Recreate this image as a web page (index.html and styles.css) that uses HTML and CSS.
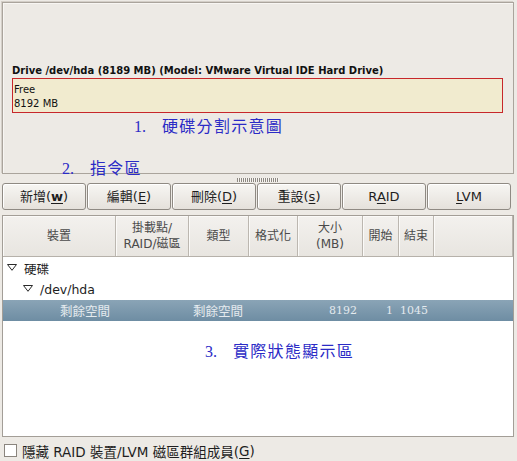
FILE: index.html
```html
<!DOCTYPE html>
<html lang="zh-Hant">
<head>
<meta charset="utf-8">
<title>Disk Druid</title>
<link rel="stylesheet" href="styles.css">
</head>
<body>
<div class="app">
  <section class="disk-panel">
    <div class="drive-label">Drive /dev/hda (8189 MB) (Model: VMware Virtual IDE Hard Drive)</div>
    <div class="drive-map">
      <div>Free</div>
      <div>8192 MB</div>
    </div>
    <div class="note note-1"><span class="num">1.</span>硬碟分割示意圖</div>
    <div class="note note-2"><span class="num">2.</span>指令區</div>
  </section>

  <div class="splitter"><span class="grip"></span></div>

  <div class="toolbar">
    <button class="btn">新增(<u class="mn">w</u>)</button>
    <button class="btn">編輯(<u>E</u>)</button>
    <button class="btn">刪除(<u>D</u>)</button>
    <button class="btn">重設(<u>s</u>)</button>
    <button class="btn">R<u>A</u>ID</button>
    <button class="btn"><u>L</u>VM</button>
  </div>

  <section class="tree">
    <div class="tree-head">
      <div class="th">裝置</div>
      <div class="th">掛載點/<br>RAID/磁區</div>
      <div class="th">類型</div>
      <div class="th">格式化</div>
      <div class="th">大小<br>(MB)</div>
      <div class="th">開始</div>
      <div class="th">結束</div>
      <div class="th"></div>
    </div>
    <div class="tree-body">
      <div class="row">
        <div class="cell lvl-0"><svg class="exp" width="10" height="7" viewBox="0 0 10 7"><polygon points="0.5,0.5 9.5,0.5 5,6.3" fill="none" stroke="#2a2a2a" stroke-width="1"/></svg>硬碟</div>
      </div>
      <div class="row">
        <div class="cell lvl-1"><svg class="exp" width="10" height="7" viewBox="0 0 10 7"><polygon points="0.5,0.5 9.5,0.5 5,6.3" fill="none" stroke="#2a2a2a" stroke-width="1"/></svg>/dev/hda</div>
      </div>
      <div class="row selected">
        <div class="cell lvl-2">剩餘空間</div>
        <div class="cell"></div>
        <div class="cell type">剩餘空間</div>
        <div class="cell"></div>
        <div class="cell num-cell">8192</div>
        <div class="cell num-cell">1</div>
        <div class="cell num-cell">1045</div>
        <div class="cell"></div>
      </div>
      <div class="note note-3"><span class="num">3.</span>實際狀態顯示區</div>
    </div>
  </section>

  <label class="hide-opt"><span class="check"></span>隱藏 RAID 裝置/LVM 磁區群組成員(<u>G</u>)</label>
</div>
</body>
</html>
```

FILE: styles.css
```css
* {
  box-sizing: border-box;
  margin: 0;
  padding: 0;
}

html, body {
  width: 517px;
  height: 461px;
  overflow: hidden;
}

body {
  background: #edeae5;
  font-family: "DejaVu Sans", "Noto Sans CJK TC", sans-serif;
  color: #1c1c1c;
}

.app {
  display: flex;
  flex-direction: column;
  height: 461px;
  padding: 2px 3px 0 2px;
}

/* ---------- drive map panel ---------- */
.disk-panel {
  flex: none;
  height: 172px;
  border: 1px solid #aaa49c;
  box-shadow: inset 1px 1px 0 #f8f6f3, -1px -1px 0 #d4cfc8;
  padding: 61px 0 0 9px;
}

.drive-label {
  font-size: 10px;
  font-weight: bold;
  line-height: 13px;
  white-space: nowrap;
  color: #111;
}

.drive-map {
  margin-top: 1px;
  width: 491px;
  height: 35px;
  border: 1px solid #c7272b;
  background: #f1ebcf;
  padding: 4px 0 0 1px;
  font-size: 10px;
  line-height: 14px;
  color: #111;
}

.note {
  font-family: "Noto Sans CJK TC", sans-serif;
  font-size: 16px;
  line-height: 16px;
  letter-spacing: 1.3px;
  color: #2b2bc6;
  white-space: nowrap;
}

.note .num {
  display: inline-block;
  width: 28px;
  font-family: "Liberation Serif", serif;
  letter-spacing: 0;
}

.note-1 {
  margin: 4px 0 0 122px;
}

.note-2 {
  margin: 24px 0 0 50px;
}

/* ---------- splitter ---------- */
.splitter {
  flex: none;
  height: 9px;
  display: flex;
  justify-content: center;
  padding-top: 4px;
}

.grip {
  width: 42px;
  height: 4px;
  background: repeating-linear-gradient(90deg, #8d8881 0 1px, #f7f5f2 1px 2px);
}

/* ---------- toolbar ---------- */
.toolbar {
  flex: none;
  display: flex;
  gap: 1px;
  height: 27px;
}

.btn {
  width: 84px;
  height: 27px;
  border: 1px solid #8f8a83;
  border-radius: 3px;
  background: linear-gradient(#f7f6f3, #e5e1db);
  box-shadow: inset 1px 1px 0 #fff;
  font-family: "DejaVu Sans", "Noto Sans CJK TC", sans-serif;
  font-size: 13px;
  color: #1e1e1e;
  line-height: 25px;
}

.btn u {
  text-decoration-thickness: 1px;
  text-underline-offset: 2px;
}

.btn .mn {
  font-weight: 600;
}

/* ---------- tree view ---------- */
.tree {
  flex: none;
  margin-top: 5px;
  height: 222px;
  border: 1px solid #a39e97;
  background: #fff;
  display: flex;
  flex-direction: column;
}

.tree-head,
.row {
  display: grid;
  grid-template-columns: 113px 73px 60px 49px 65px 36px 35px 1fr;
}

.tree-head {
  height: 41px;
  border-bottom: 1px solid #b6b1aa;
  background: linear-gradient(#f3f1ee, #e8e5e0);
}

.th {
  display: flex;
  align-items: center;
  justify-content: center;
  text-align: center;
  border-right: 1px solid #bcb7b0;
  box-shadow: inset 1px 1px 0 #fbfaf8;
  font-size: 12px;
  line-height: 16px;
  color: #4a4a4a;
}

.tree-body {
  padding-top: 1px;
}

.row {
  height: 21px;
  font-size: 12.5px;
  color: #1e1e1e;
}

.cell {
  display: flex;
  align-items: center;
  white-space: nowrap;
  overflow: visible;
}

.lvl-0 {
  grid-column: 1 / -1;
  padding-left: 4px;
}

.lvl-1 {
  grid-column: 1 / -1;
  padding-left: 20px;
}

.exp {
  flex: none;
  margin-right: 7px;
  margin-top: -2px;
}

.selected {
  background: linear-gradient(#8aa4b6, #6e8da3);
  color: #e4eaee;
}

.lvl-2 {
  padding-left: 57px;
}

.type {
  padding-left: 4px;
}

.num-cell {
  justify-content: flex-end;
  padding-right: 6px;
  font-family: "DejaVu Serif", serif;
  font-size: 11px;
}

.note-3 {
  margin: 21px 0 0 202px;
}

/* ---------- bottom option ---------- */
.hide-opt {
  flex: none;
  display: flex;
  align-items: center;
  height: 24px;
  padding: 3px 0 0 2px;
  font-size: 13.5px;
  color: #1e1e1e;
  white-space: nowrap;
}

.check {
  flex: none;
  width: 13px;
  height: 13px;
  border: 1px solid #8a857e;
  background: #fff;
  margin-right: 5px;
}

.hide-opt u {
  text-underline-offset: 2px;
}
```
